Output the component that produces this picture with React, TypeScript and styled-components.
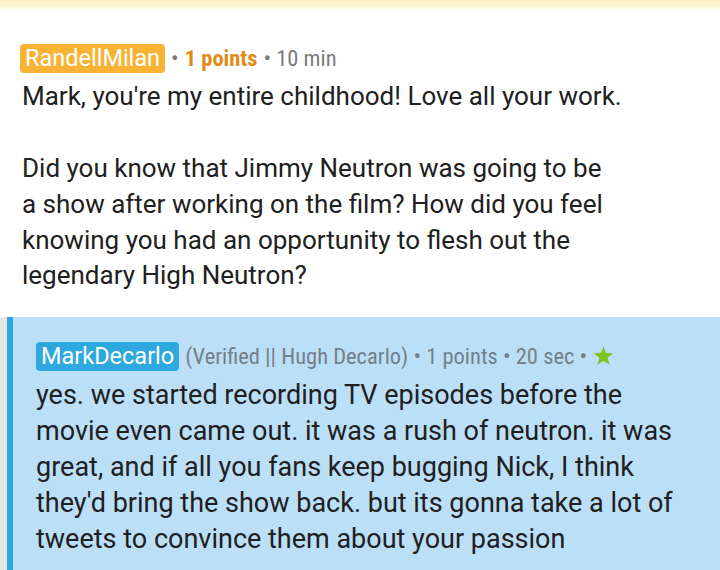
import React from "react";
import styled, { createGlobalStyle } from "styled-components";

const Global = createGlobalStyle`
  html, body { margin: 0; padding: 0; background: #ffffff; }
  body { font-family: Roboto, "Noto Sans", sans-serif; }
`;

const Page = styled.div`
  width: 720px;
  height: 570px;
  overflow: hidden;
  display: flex;
  flex-direction: column;
  background: #ffffff;
`;

const TopStrip = styled.div`
  height: 10px;
  background: linear-gradient(#fdf0c2 0%, #fdf3cf 60%, #ffffff 100%);
`;

const Comment = styled.div`
  padding: 33px 20px 23px 20px;
`;

const Meta = styled.div`
  display: flex;
  align-items: center;
  gap: 6px;
  height: 30px;
  font-family: "Roboto Condensed", Roboto, sans-serif;
  font-stretch: condensed;
  font-size: 22.5px;
  line-height: 30px;
  color: #7b7b7b;
`;

const Badge = styled.span<{ $bg: string }>`
  background: ${(p) => p.$bg};
  color: #ffffff;
  border-radius: 4px;
  padding: 0 5px;
  height: 29px;
  display: inline-flex;
  align-items: center;
  font-family: Roboto, sans-serif;
  font-stretch: normal;
  font-size: 23.5px;
`;

const Points = styled.span<{ $color: string; $bold?: boolean }>`
  color: ${(p) => p.$color};
  font-weight: ${(p) => (p.$bold ? 700 : 400)};
`;

const Body = styled.div`
  font-size: 26px;
  line-height: 35.7px;
  color: #202020;
  margin: 6px 0 0 2px;
`;

const Para = styled.p`
  margin: 0;
  & + & { margin-top: 36.5px; }
`;

const ReplyWrap = styled.div`
  flex: 1;
  display: flex;
  background: #e6e6e6;
  padding-left: 7px;
`;

const Reply = styled.div`
  flex: 1;
  background: #bcdff8;
  border-left: 6px solid #2aa7dc;
  padding: 24px 20px 0 23px;
`;

const ReplyBody = styled(Body)`
  font-size: 27px;
  line-height: 36px;
  margin-left: 0;
`;

const ReplyMeta = styled(Meta)`
  color: #738089;
`;

const Star = () => (
  <svg width="21" height="20" viewBox="0 0 24 23">
    <path
      d="M12 0.5 L14.9 8.1 L23.2 8.4 L16.7 13.6 L19 21.7 L12 17 L5 21.7 L7.3 13.6 L0.8 8.4 L9.1 8.1 Z"
      fill="#7cc51c"
    />
  </svg>
);

export default function App() {
  return (
    <Page>
      <Global />
      <TopStrip />
      <Comment>
        <Meta>
          <Badge $bg="#f8b334">RandellMilan</Badge>
          <span>•</span>
          <Points $color="#e08a17" $bold>1 points</Points>
          <span>• 10 min</span>
        </Meta>
        <Body>
          <Para>Mark, you're my entire childhood! Love all your work.</Para>
          <Para>
            Did you know that Jimmy Neutron was going to be
            <br />a show after working on the film? How did you feel
            <br />knowing you had an opportunity to flesh out the
            <br />legendary High Neutron?
          </Para>
        </Body>
      </Comment>
      <ReplyWrap>
        <Reply>
          <ReplyMeta>
            <Badge $bg="#2ea9df">MarkDecarlo</Badge>
            <span>(Verified || Hugh Decarlo) • 1 points • 20 sec •</span>
            <Star />
          </ReplyMeta>
          <ReplyBody>
            yes. we started recording TV episodes before the
            <br />movie even came out. it was a rush of neutron. it was
            <br />great, and if all you fans keep bugging Nick, I think
            <br />they'd bring the show back. but its gonna take a lot of
            <br />tweets to convince them about your passion
          </ReplyBody>
        </Reply>
      </ReplyWrap>
    </Page>
  );
}
